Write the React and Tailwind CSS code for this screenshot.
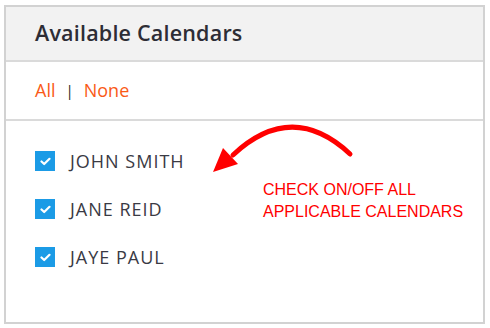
import React from "react";

function Check() {
  return (
    <span className="flex h-[20px] w-[20px] items-center justify-center bg-[#1b9be6]">
      <svg width="11" height="9" viewBox="0 0 11 9">
        <path d="M1.5 4.5 L4.2 7 L9.5 1.8" fill="none" stroke="#fff" strokeWidth="2.2" strokeLinecap="round" strokeLinejoin="round" />
      </svg>
    </span>
  );
}

export default function App() {
  const names = ["JOHN SMITH", "JANE REID", "JAYE PAUL"];
  return (
    <div className="h-[328px] w-[490px] bg-white pl-[4px] pt-[5px]" style={{ fontFamily: '"Open Sans", sans-serif' }}>
      <div className="relative flex h-[319px] w-[481px] flex-col border-2 border-[#d2d2d2] bg-white">
        <div className="flex h-[55px] items-center border-b-2 border-[#dadada] bg-[#f2f2f2] pl-[29px]">
          <h2 className="text-[21.5px] font-semibold tracking-[0.2px] text-[#2d2d35]">Available Calendars</h2>
        </div>
        <div className="flex h-[59px] items-center border-b-2 border-[#dadada] pl-[29px] text-[18px] text-[#fa5a17]">
          <span>All</span>
          <span className="mx-[10px] text-[15px] text-[#222]">|</span>
          <span>None</span>
        </div>
        <div className="flex flex-col gap-[28px] pl-[29px] pt-[30px]">
          {names.map((n) => (
            <div key={n} className="flex h-[20px] items-center gap-[15px]">
              <Check />
              <span className="text-[18px] tracking-[1px] text-[#3a3a44]">{n}</span>
            </div>
          ))}
        </div>
        <svg className="absolute left-0 top-0" width="481" height="319" viewBox="4 5 481 319">
          <path d="M348 152 Q290 98 231 153" fill="none" stroke="#ff0000" strokeWidth="5" strokeLinecap="round" />
          <polygon points="211,170 221,146 236,162" fill="#ff0000" />
        </svg>
        <div
          className="absolute left-[257px] top-[172px] text-[16px] leading-[22px] text-[#ff0000]"
          style={{ fontFamily: '"Liberation Sans", Arial, sans-serif' }}
        >
          CHECK ON/OFF ALL
          <br />
          APPLICABLE CALENDARS
        </div>
      </div>
    </div>
  );
}
